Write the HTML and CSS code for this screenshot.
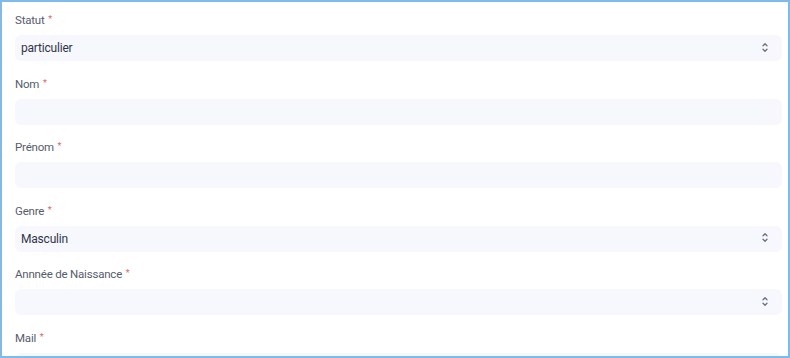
FILE: index.html
```html
<!DOCTYPE html>
<html lang="fr">
<head>
<meta charset="utf-8">
<link rel="stylesheet" href="styles.css">
</head>
<body>
<div class="frame">
  <form class="form">
    <div class="field">
      <label class="label">Statut <span class="req">*</span></label>
      <div class="input select"><span class="value">particulier</span>
        <svg class="chev" width="6" height="11" viewBox="0 0 6 11"><path d="M1 3.8 L3 1.8 L5 3.8 M1 7.2 L3 9.2 L5 7.2" fill="none" stroke="#6b7080" stroke-width="1.3" stroke-linecap="round" stroke-linejoin="round"/></svg>
      </div>
    </div>
    <div class="field">
      <label class="label">Nom <span class="req">*</span></label>
      <div class="input"></div>
    </div>
    <div class="field">
      <label class="label">Prénom <span class="req">*</span></label>
      <div class="input"></div>
    </div>
    <div class="field">
      <label class="label">Genre <span class="req">*</span></label>
      <div class="input select"><span class="value">Masculin</span>
        <svg class="chev" width="6" height="11" viewBox="0 0 6 11"><path d="M1 3.8 L3 1.8 L5 3.8 M1 7.2 L3 9.2 L5 7.2" fill="none" stroke="#6b7080" stroke-width="1.3" stroke-linecap="round" stroke-linejoin="round"/></svg>
      </div>
    </div>
    <div class="field">
      <label class="label">Annnée de Naissance <span class="req">*</span></label>
      <div class="input select"><span class="value"></span>
        <svg class="chev" width="6" height="11" viewBox="0 0 6 11"><path d="M1 3.8 L3 1.8 L5 3.8 M1 7.2 L3 9.2 L5 7.2" fill="none" stroke="#6b7080" stroke-width="1.3" stroke-linecap="round" stroke-linejoin="round"/></svg>
      </div>
    </div>
    <div class="field">
      <label class="label">Mail <span class="req">*</span></label>
      <div class="input"></div>
    </div>
  </form>
</div>
</body>
</html>
```
FILE: styles.css
```css
* { box-sizing: border-box; }
html, body { margin: 0; padding: 0; background: #fff; }
body { font-family: Roboto, "Noto Sans", sans-serif; }
.frame {
  width: 790px;
  height: 358px;
  border: 2px solid #7fbbea;
  overflow: hidden;
  padding: 9px 6px 0 13px;
}
.form { display: flex; flex-direction: column; }
.field {
  display: flex;
  flex-direction: column;
  gap: 6px;
  margin-bottom: 13.5px;
}
.label {
  display: block;
  height: 18px;
  font-size: 11.5px;
  line-height: 18px;
  letter-spacing: -0.2px;
  color: #565c6c;
}
.req {
  color: #e06666;
  font-size: 9px;
  line-height: 0;
  vertical-align: 2px;
  margin-left: 1px;
}
.input {
  height: 26px;
  flex: none;
  background: #f7f8fd;
  border-radius: 6px;
  display: flex;
  align-items: center;
  justify-content: space-between;
  padding: 0 14px 0 6px;
}
.value {
  font-size: 12px;
  letter-spacing: -0.2px;
  color: #30364a;
}
.chev { display: block; margin-top: -2px; }
```
